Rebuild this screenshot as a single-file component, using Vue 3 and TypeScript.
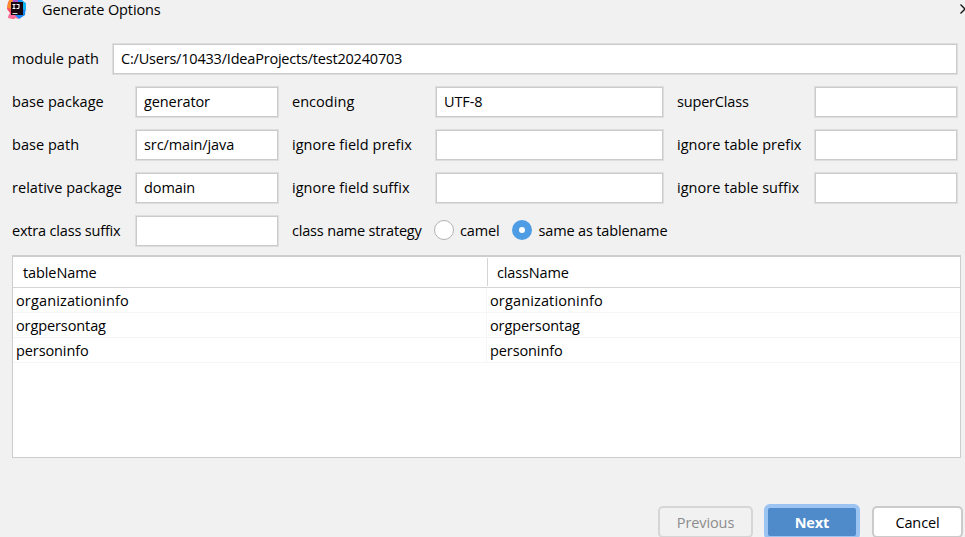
<script setup lang="ts">
import { ref } from 'vue'

interface Field {
  label: string
  value: string
  tight?: boolean
}

const modulePath = ref('C:/Users/10433/IdeaProjects/test20240703')

const rows = ref<Field[][]>([
  [
    { label: 'base package', value: 'generator' },
    { label: 'encoding', value: 'UTF-8' },
    { label: 'superClass', value: '', tight: true },
  ],
  [
    { label: 'base path', value: 'src/main/java' },
    { label: 'ignore field prefix', value: '' },
    { label: 'ignore table prefix', value: '' },
  ],
  [
    { label: 'relative package', value: 'domain' },
    { label: 'ignore field suffix', value: '' },
    { label: 'ignore table suffix', value: '' },
  ],
])
const extraSuffix = ref('')
const strategies = ['camel', 'same as tablename']
const strategy = ref('same as tablename')
const tables = ['organizationinfo', 'orgpersontag', 'personinfo']
</script>

<template>
  <div class="dialog">
    <header class="title-bar">
      <svg class="logo" width="20" height="20" viewBox="0 0 20 20">
        <path d="M1 2L5 0H9V17L7 19L1 18L3 13L0 9Z" fill="#fc4767" />
        <path d="M2 0H6L4 9L0 8Z" fill="#ff8a2c" />
        <path d="M8 0H15L19 4L18 15L12 19L7 16Z" fill="#1687f8" />
        <path d="M13 0L19 3V11L15 8Z" fill="#16b8f3" />
        <path d="M2 14L7 14L12 19L8 18L1 18Z" fill="#f96d9f" />
        <path d="M6 0H11V5H5Z" fill="#a755c8" />
        <rect x="4" y="2" width="12" height="13" fill="#17070f" />
        <path d="M5.5 4.5H8.5M7 4V8M5.5 8.5H8.5M9.5 4.5H12V7.2Q12 8.5 11 8.5H9.5" fill="none" stroke="#fff" stroke-width="1.1" />
        <path d="M5.5 13.5H10.5" stroke="#ddd" stroke-width="1" />
      </svg>
      <span class="title">Generate Options</span>
      <svg class="close" width="10" height="10" viewBox="0 0 10 10">
        <path d="M0.5 0.5L9.5 9.5M9.5 0.5L0.5 9.5" stroke="#111" stroke-width="1.3" />
      </svg>
    </header>

    <div class="module-row">
      <label class="label">module path</label>
      <input v-model="modulePath" class="input path" spellcheck="false" />
    </div>

    <div class="form">
      <template v-for="(row, i) in rows" :key="i">
        <template v-for="(field, j) in row" :key="field.label">
          <label class="label" :class="{ inner: j > 0, tight: field.tight }">{{ field.label }}</label>
          <input v-model="field.value" class="input" spellcheck="false" />
        </template>
      </template>
      <label class="label tight">extra class suffix</label>
      <input v-model="extraSuffix" class="input" />
      <span class="label inner tight">class name strategy</span>
      <div class="radios">
        <label v-for="s in strategies" :key="s" class="radio">
          <input v-model="strategy" type="radio" name="strategy" :value="s" class="dot" />
          <span>{{ s }}</span>
        </label>
      </div>
    </div>

    <div class="table">
      <div class="thead">
        <span class="th">tableName</span>
        <span class="th second">className</span>
      </div>
      <div v-for="t in tables" :key="t" class="tr" :class="{ wide: t.length > 12 }">
        <span class="td">{{ t }}</span>
        <span class="td second">{{ t }}</span>
      </div>
    </div>

    <footer class="actions">
      <button class="btn previous" disabled>Previous</button>
      <button class="btn next">Next</button>
      <button class="btn cancel">Cancel</button>
    </footer>
  </div>
</template>

<style>
body {
  background: #f1f1f1;
  overflow: hidden;
}
</style>

<style scoped>
.dialog {
  box-sizing: border-box;
  width: 965px;
  height: 537px;
  overflow: hidden;
  display: flex;
  flex-direction: column;
  background: #f1f1f1;
  color: #000;
  font-family: "Open Sans", "Noto Sans", sans-serif;
  font-size: 14.5px;
  letter-spacing: -0.1px;
  line-height: 20px;
  white-space: nowrap;
}
.title-bar {
  display: flex;
  height: 43px;
  flex: none;
  padding-left: 7px;
}
.logo {
  flex: none;
}
.title {
  margin-left: 15px;
}
.close {
  flex: none;
  margin: 4px -5px 0 auto;
}
.module-row {
  display: grid;
  grid-template-columns: 100px 846px;
  padding-left: 12px;
  height: 32px;
  flex: none;
  align-items: center;
}
.label {
  letter-spacing: 0.04px;
}
.label.inner {
  padding-left: 13px;
}
.label.tight {
  letter-spacing: -0.18px;
}
.input {
  box-sizing: border-box;
  width: 100%;
  height: 32px;
  margin: 0;
  padding: 0 8px 1px;
  border: 1px solid #dedede;
  box-shadow: inset 0 0 0 1px #cbcbcb;
  border-radius: 0;
  background: #fff;
  color: inherit;
  font: inherit;
  letter-spacing: inherit;
  outline: none;
}
.input.path {
  letter-spacing: -0.2px;
}
.form {
  display: grid;
  grid-template-columns: 123px 144px 156px 229px 150px 144px;
  grid-auto-rows: 32px;
  row-gap: 11px;
  margin: 11px 0 0 12px;
  align-items: center;
  flex: none;
}
.label.inner.tight + .input {
  letter-spacing: 0;
}
.radios {
  display: flex;
  gap: 13px;
  margin-left: -1px;
  letter-spacing: -0.15px;
}
.radio {
  display: flex;
  align-items: center;
  gap: 6px;
}
.dot {
  appearance: none;
  box-sizing: border-box;
  width: 20px;
  height: 20px;
  margin: 0;
  position: relative;
  top: -1px;
  border: 1.5px solid #b2b2b2;
  border-radius: 50%;
  background: #fff;
}
.dot:checked {
  border: 7px solid #4e9de4;
}
.table {
  box-sizing: border-box;
  width: 949px;
  height: 203px;
  margin: 8px 0 0 12px;
  border: 1px solid #cdcdcd;
  border-top-width: 2px;
  background: #fff;
  flex: none;
}
.thead {
  box-sizing: border-box;
  display: flex;
  height: 31px;
  padding-top: 1px;
  border-bottom: 1px solid #d4d4d4;
}
.th {
  box-sizing: border-box;
  width: 474px;
  height: 28px;
  padding-left: 10px;
  line-height: 29px;
}
.th.second {
  border-left: 1px solid #d4d4d4;
  padding-left: 9.5px;
  letter-spacing: -0.15px;
}
.tr {
  box-sizing: border-box;
  display: flex;
  height: 25px;
  border-bottom: 1px solid #f6f6f6;
}
.tr.wide {
  letter-spacing: 0.14px;
}
.td {
  box-sizing: border-box;
  width: 473px;
  height: 24px;
  padding-left: 3px;
  line-height: 26px;
}
.td.second {
  border-left: 1px solid #f6f6f6;
}
.actions {
  display: flex;
  gap: 11px;
  margin: 46px 2px 0 auto;
  flex: none;
  align-items: flex-start;
}
.btn {
  box-sizing: border-box;
  height: 32px;
  margin: 2px 0 0;
  padding: 1px 0 0;
  border: 2px solid #cbcbcb;
  border-radius: 5px;
  background: #fff;
  color: #000;
  font: inherit;
  letter-spacing: inherit;
}
.previous {
  width: 95px;
  background: #f1f1f1;
  border-color: #d6d6d6;
  color: #8c8c8c;
}
.next {
  width: 96px;
  height: 36px;
  margin-top: 0;
  border: 4px solid #9bc4f3;
  border-radius: 6px;
  background: #4f8aca;
  color: #fff;
  font-weight: 700;
}
.cancel {
  width: 91px;
  margin-left: 1px;
}
</style>
